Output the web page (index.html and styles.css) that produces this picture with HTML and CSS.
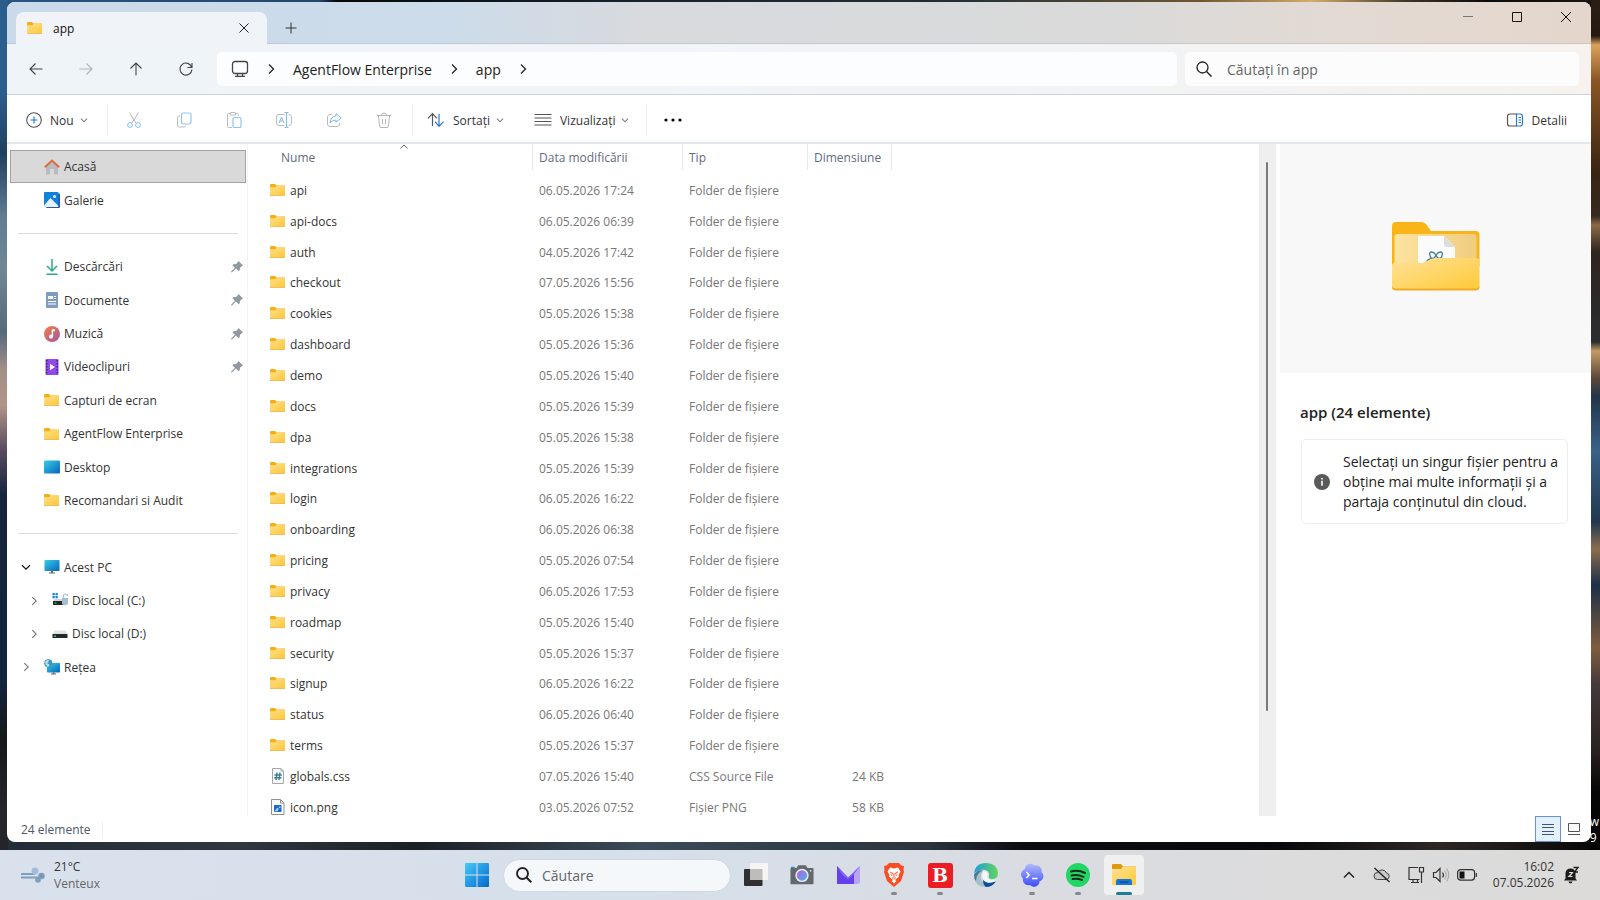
FILE: index.html
```html
<!DOCTYPE html>
<html lang="ro">
<head>
    <meta charset="UTF-8">
    <meta name="viewport" content="width=device-width, initial-scale=1.0">
    <title>app</title>
    <link rel="stylesheet" href="styles.css">
</head>
<body>
    <svg class="sprite" aria-hidden="true">
        <defs>
            <linearGradient id="gFolder" x1="0" y1="0" x2="1" y2="1">
                <stop offset="0" stop-color="#ffe08a"/><stop offset="1" stop-color="#fcc73a"/>
            </linearGradient>
            <linearGradient id="gScreen" x1="0" y1="0" x2="1" y2="1">
                <stop offset="0" stop-color="#35d0e8"/><stop offset="1" stop-color="#0a62b8"/>
            </linearGradient>
            <symbol id="folder" viewBox="0 0 16 16">
                <path d="M0 3.2Q0 2 1.2 2H5l1.6 1.5H15v3H0z" fill="#f5ae14"/>
                <path d="M0 5.2h5.4l1.2-1.4H15v9.4H0z" fill="url(#gFolder)"/>
                <path d="M0 13.2h15v.8H0z" fill="#eeb03a"/>
            </symbol>
            <symbol id="chev-right" viewBox="0 0 16 16">
                <path d="M6 3.5 10.5 8 6 12.5" fill="none" stroke="currentColor" stroke-width="1.3"/>
            </symbol>
            <symbol id="chev-down" viewBox="0 0 16 16">
                <path d="M4.5 6.5 8 10l3.500-3.500" fill="none" stroke="currentColor" stroke-width="1.2"/>
            </symbol>
            <symbol id="pin" viewBox="0 0 12 12">
                <path d="M7.600 0 12 4.400 11 5 9 6.800 8.700 9.300 7.600 10.200 4.900 7.600 1 11.500.2 11.200 0 10.800 3.900 6.800 1.400 4.200 2.400 3.200 5 3.100 7 1z" fill="#8f9aa0"/>
            </symbol>
            <symbol id="drive" viewBox="0 0 16 16">
                <path d="M2.500 4.500h11L15.500 8H.5z" fill="#dfe2e4"/>
                <path d="M.5 8h15v4h-15z" fill="#24282a"/>
                <path d="M2 9.500h2v1.200H2z" fill="#2fe06a"/>
            </symbol>
        </defs>
    </svg>

    <div class="desktop">
        <div class="desktop-label">w<br>9</div>

        <main class="window">
            <header class="titlebar">
                <div class="tab">
                    <svg class="icon"><use href="#folder"/></svg>
                    <span class="tab-name">app</span>
                    <button class="tab-close" aria-label="Închideți fila">
                        <svg viewBox="0 0 10 10" width="10" height="10"><path d="m.5.5 9 9m0-9-9 9" stroke="#222" fill="none"/></svg>
                    </button>
                </div>
                <button class="new-tab" aria-label="Filă nouă">
                    <svg viewBox="0 0 12 12" width="12" height="12"><path d="M6 .5v11M.5 6h11" stroke="#333" fill="none"/></svg>
                </button>
                <div class="window-controls">
                    <button aria-label="Minimizare"><svg viewBox="0 0 10 10" width="10" height="10"><path d="M0 4.500h10" stroke="#777"/></svg></button>
                    <button aria-label="Maximizare"><svg viewBox="0 0 10 10" width="10" height="10"><path d="M.5.5h9v9h-9z" stroke="#111" fill="none"/></svg></button>
                    <button aria-label="Închidere"><svg viewBox="0 0 10 10" width="10" height="10"><path d="m0 0 10 10M10 0 0 10" stroke="#111" fill="none"/></svg></button>
                </div>
            </header>

            <nav class="address-row">
                <div class="nav-buttons">
                    <button aria-label="Înapoi"><svg class="icon" viewBox="0 0 16 16"><path d="M14.500 8H2M7.500 2.500 2 8l5.500 5.500" fill="none" stroke="#444" stroke-width="1.100"/></svg></button>
                    <button aria-label="Înainte" disabled><svg class="icon" viewBox="0 0 16 16"><path d="M1.500 8H14M8.500 2.500 14 8l-5.500 5.500" fill="none" stroke="#b0b4b8" stroke-width="1.100"/></svg></button>
                    <button aria-label="Sus"><svg class="icon" viewBox="0 0 16 16"><path d="M8 14.500V2M2.500 7.500 8 2l5.500 5.500" fill="none" stroke="#444" stroke-width="1.100"/></svg></button>
                    <button aria-label="Reîmprospătare"><svg class="icon" viewBox="0 0 16 16"><path d="M13.800 6.500A6 6 0 1 0 14 8.500M14 2v4.500H9.500" fill="none" stroke="#444" stroke-width="1.100"/></svg></button>
                </div>
                <div class="breadcrumb">
                    <svg class="monitor" viewBox="0 0 18 18"><rect x="1.500" y="1.500" width="15" height="12" rx="2.500" fill="none" stroke="#444" stroke-width="1.300"/><path d="M6.500 13.500V16m5-2.500V16M4 16.300h10" stroke="#444" stroke-width="1.300"/></svg>
                    <svg class="icon crumb-sep"><use href="#chev-right"/></svg>
                    <a href="#">AgentFlow Enterprise</a>
                    <svg class="icon crumb-sep"><use href="#chev-right"/></svg>
                    <a href="#">app</a>
                    <svg class="icon crumb-sep"><use href="#chev-right"/></svg>
                </div>
                <label class="search-box">
                    <svg class="icon" viewBox="0 0 16 16"><circle cx="6.500" cy="6.500" r="5.500" fill="none" stroke="#222" stroke-width="1.300"/><path d="m10.500 10.500 5 5" stroke="#222" stroke-width="1.400"/></svg>
                    <input type="text" placeholder="Căutați în app" aria-label="Căutați în app">
                </label>
            </nav>

            <div class="toolbar">
                <button class="tool new-button">
                    <svg class="icon" viewBox="0 0 16 16"><circle cx="8" cy="8" r="7.300" fill="none" stroke="#555" stroke-width="1.100"/><path d="M8 4.500v7M4.500 8h7" stroke="#2b78d8" stroke-width="1.200"/></svg>
                    Nou
                    <svg class="chev"><use href="#chev-down"/></svg>
                </button>
                <div class="tool-icons">
                    <button aria-label="Decupați" disabled><svg class="icon" viewBox="0 0 16 16" fill="none"><path d="m3.500.5 6.700 10.800M12.500.5 5.800 11.300" stroke="#b4b8bc"/><circle cx="4" cy="13" r="2.400" stroke="#7fbcf2"/><circle cx="12" cy="13" r="2.400" stroke="#7fbcf2"/></svg></button>
                    <button aria-label="Copiați" disabled><svg class="icon" viewBox="0 0 16 16" fill="none"><path d="M4 4H3Q1.500 4 1.500 5.500v7.500Q1.500 15 3.500 15H8q1.500 0 1.500-1.500" stroke="#b9bdc0"/><rect x="5.500" y="1" width="9.500" height="11" rx="1.800" stroke="#8fc6f5" stroke-width="1.200"/></svg></button>
                    <button aria-label="Lipiți" disabled><svg class="icon" viewBox="0 0 16 16" fill="none"><path d="M6 15.500H2.500Q1.500 15.500 1.500 14.500v-12Q1.500 1.500 2.500 1.500H4m6 0h1.500q1 0 1 1V4M4.500.5h5V3h-5z" stroke="#b9bdc0"/><rect x="7" y="5.500" width="8" height="10" rx="1.200" stroke="#8fc6f5" stroke-width="1.200"/></svg></button>
                    <button aria-label="Redenumiți" disabled><svg class="wide" viewBox="0 0 18 16" fill="none"><path d="M9.500 2.500H4Q1.500 2.500 1.500 5v6q0 2.500 2.500 2.500h5.500m4-11Q16.500 2.500 16.500 5v6q0 2.500-3 2.500" stroke="#b9bdc0"/><path d="M4 11 6.500 5 9 11M5 9h3M9.500.5h4m-2 0v15m-2 0h4" stroke="#7fbcf2"/></svg></button>
                    <button aria-label="Partajați" disabled><svg class="icon" viewBox="0 0 16 16" fill="none"><path d="M6 2.500H4Q1.500 2.500 1.500 5v7q0 2.500 2.500 2.500h7q2.500 0 2.500-2.500v-1" stroke="#b9bdc0"/><path d="M10 1.500 15.200 6 10 10.300V8Q6 8 4 11 4.500 4.500 10 4z" stroke="#7fbcf2"/></svg></button>
                    <button aria-label="Ștergeți" disabled><svg class="icon" viewBox="0 0 16 16" fill="none"><path d="M1 3.500h14M5.500 3.500Q5.500 1 8 1t2.500 2.500M2.500 3.500l1 10.500q.2 1.500 1.500 1.500h6q1.300 0 1.500-1.500l1-10.500M6.500 7v5m3-5v5" stroke="#b4b7ba"/></svg></button>
                </div>
                <button class="tool sort-button">
                    <svg class="wide" viewBox="0 0 18 16" fill="none" stroke-width="1.200"><path d="M5.500 14V2M1 6.300 5.500 1.700 10 6.300" stroke="#555"/><path d="M12 2v12M8 9.700l4 4.600 4.500-4.600" stroke="#2b78d8"/></svg>
                    Sortați
                    <svg class="chev"><use href="#chev-down"/></svg>
                </button>
                <button class="tool view-button">
                    <svg class="wide" viewBox="0 0 18 16"><path d="M.5 2.500h17m-17 3.500h17m-17 3.500h17m-17 3.500h17" stroke="#555" stroke-width="1.100"/></svg>
                    Vizualizați
                    <svg class="chev"><use href="#chev-down"/></svg>
                </button>
                <button class="more-button" aria-label="Mai multe">
                    <svg viewBox="0 0 18 4" width="18" height="4"><circle cx="2" cy="2" r="1.600"/><circle cx="9" cy="2" r="1.600"/><circle cx="16" cy="2" r="1.600"/></svg>
                </button>
                <button class="tool details-button">
                    <svg class="wide" viewBox="0 0 18 16" fill="none"><path d="M10.500 2H4Q1.500 2 1.500 4.500v7Q1.500 14 4 14h6.500" stroke="#555" stroke-width="1.200"/><path d="M10.500 2H14q2.500 0 2.500 2.500v7Q16.500 14 14 14h-3.500zM12.500 5.500h2.500m-2.500 2.500h2.500m-2.500 2.500h2.500" stroke="#2b78d8" stroke-width="1.200"/></svg>
                    Detalii
                </button>
            </div>

            <div class="content">
                <nav class="sidebar">
                    <a href="#" class="place selected">
                        <svg class="icon" viewBox="0 0 16 16"><path d="M2 7 8 2l6 5v8.500h-4V10H6v5.500H2z" fill="#b9bcbf"/><path d="M.8 8.300 8 1.500l7.200 6.800" fill="none" stroke="#e0693a" stroke-width="1.900"/></svg>
                        <span>Acasă</span>
                    </a>
                    <a href="#" class="place">
                        <svg class="icon" viewBox="0 0 16 16"><path d="M14 1.500h1q1 0 1 1V15q0 1-1 1H3q-1 0-1-1h12z" fill="#2a55a5"/><rect width="14.500" height="15" rx="1" fill="#0f82dc"/><path d="m0 13.500 6.500-7.500 8 8q0 1-1 1H1q-1 0-1-1z" fill="#e6f3fd"/><circle cx="10.500" cy="4.500" r="1.500" fill="#e6f3fd"/></svg>
                        <span>Galerie</span>
                    </a>
                    <hr>
                    <a href="#" class="place">
                        <svg class="icon" viewBox="0 0 16 16"><path d="M8 0v11.500M3 7l5 5 5-5M2.500 15.200h11" fill="none" stroke="#2fa98c" stroke-width="1.500"/></svg>
                        <span>Descărcări</span>
                        <svg class="pin"><use href="#pin"/></svg>
                    </a>
                    <a href="#" class="place">
                        <svg class="icon" viewBox="0 0 16 16"><rect x="2" width="12" height="16" rx="1" fill="#7d9cc0"/><path d="M4 4h5v3H4zM4 9h8v1H4zm0 2.500h8v1H4zM10 4h2v1h-2zm0 2h2v1h-2z" fill="#fff"/></svg>
                        <span>Documente</span>
                        <svg class="pin"><use href="#pin"/></svg>
                    </a>
                    <a href="#" class="place">
                        <svg class="icon" viewBox="0 0 16 16"><defs><linearGradient id="gMusic" x1="0" y1="0" x2="1" y2="1"><stop offset="0" stop-color="#ee8246"/><stop offset="1" stop-color="#a753a0"/></linearGradient></defs><circle cx="8" cy="8" r="8" fill="url(#gMusic)"/><path d="M7.700 3.500 10.800 3v2.200l-1.700.4V10.500a2 2 0 1 1-1.400-1.800z" fill="#fff"/></svg>
                        <span>Muzică</span>
                        <svg class="pin"><use href="#pin"/></svg>
                    </a>
                    <a href="#" class="place">
                        <svg class="icon" viewBox="0 0 16 16"><rect x="1.500" width="13" height="16" rx="1" fill="#8f4be4"/><path d="M2.700 1v14.500M13.300 1v14.500" stroke="#401d78" stroke-width="1.400" stroke-dasharray="1.500 1.500"/><path d="m6 4.700 5 3.300-5 3.300z" fill="#fff"/></svg>
                        <span>Videoclipuri</span>
                        <svg class="pin"><use href="#pin"/></svg>
                    </a>
                    <a href="#" class="place"><svg class="icon"><use href="#folder"/></svg><span>Capturi de ecran</span></a>
                    <a href="#" class="place"><svg class="icon"><use href="#folder"/></svg><span>AgentFlow Enterprise</span></a>
                    <a href="#" class="place"><svg class="icon" viewBox="0 0 16 16"><rect y="1.500" width="16" height="13" rx="1" fill="url(#gScreen)"/></svg><span>Desktop</span></a>
                    <a href="#" class="place"><svg class="icon"><use href="#folder"/></svg><span>Recomandari si Audit</span></a>
                    <hr>
                    <a href="#" class="place tree open">
                        <svg class="expander"><use href="#chev-right"/></svg>
                        <svg class="icon" viewBox="0 0 16 16"><rect x=".5" y="1" width="15" height="11" rx=".8" fill="url(#gScreen)"/><path d="M7 12h2v1.500h2v1H5v-1h2z" fill="#667"/></svg>
                        <span>Acest PC</span>
                    </a>
                    <a href="#" class="place tree nested">
                        <svg class="expander"><use href="#chev-right"/></svg>
                        <svg class="icon" viewBox="0 0 16 16"><path d="M.5 0h2.300v2.300H.5zm3 0h2.300v2.300H3.500zm-3 3h2.300v2.300H.5zm3 0h2.300v2.300H3.500z" fill="#1d82dd"/><path d="M2.500 6h9l1 2.500H1z" fill="#d5d8da"/><path d="M1 8h11v4H1z" fill="#24282a"/><path d="M2.500 9.500h2v1h-2z" fill="#2fe06a"/><path d="M11.500 5V3q0-2 2-2t2 2" fill="none" stroke="#a9bbcc" stroke-width="1.100"/><path d="M10 5h6v6q-3 2.500-6 0z" fill="#a7bdd1"/></svg>
                        <span>Disc local (C:)</span>
                    </a>
                    <a href="#" class="place tree nested">
                        <svg class="expander"><use href="#chev-right"/></svg>
                        <svg class="icon"><use href="#drive"/></svg>
                        <span>Disc local (D:)</span>
                    </a>
                    <a href="#" class="place tree">
                        <svg class="expander"><use href="#chev-right"/></svg>
                        <svg class="icon" viewBox="0 0 16 16"><rect x="3" y="4" width="13" height="9.500" rx=".8" fill="url(#gScreen)"/><path d="M8.500 13.500h2v1h1.500v1H7v-1h1.500z" fill="#667"/><circle cx="4.300" cy="4.300" r="4.100" fill="#3f94bd"/><path d="M1 3q2-3 4-1.500-.2 2-2 3 2.500 0 2.500 2L4 8Q1 6 1 3z" fill="#b6dfe8"/></svg>
                        <span>Rețea</span>
                    </a>
                </nav>

                <section class="file-list">
                    <svg class="sort-mark" viewBox="0 0 8 5"><path d="M.5 4.500 4 1l3.500 3.500" fill="none" stroke="#666"/></svg>
                    <table>
                        <thead>
                            <tr><th class="name">Nume</th><th class="date">Data modificării</th><th class="type">Tip</th><th class="size">Dimensiune</th><th class="rest"></th></tr>
                        </thead>
                        <tbody>
                            <tr><td><svg class="icon"><use href="#folder"/></svg>api</td><td>06.05.2026 17:24</td><td>Folder de fișiere</td><td></td></tr>
                            <tr><td><svg class="icon"><use href="#folder"/></svg>api-docs</td><td>06.05.2026 06:39</td><td>Folder de fișiere</td><td></td></tr>
                            <tr><td><svg class="icon"><use href="#folder"/></svg>auth</td><td>04.05.2026 17:42</td><td>Folder de fișiere</td><td></td></tr>
                            <tr><td><svg class="icon"><use href="#folder"/></svg>checkout</td><td>07.05.2026 15:56</td><td>Folder de fișiere</td><td></td></tr>
                            <tr><td><svg class="icon"><use href="#folder"/></svg>cookies</td><td>05.05.2026 15:38</td><td>Folder de fișiere</td><td></td></tr>
                            <tr><td><svg class="icon"><use href="#folder"/></svg>dashboard</td><td>05.05.2026 15:36</td><td>Folder de fișiere</td><td></td></tr>
                            <tr><td><svg class="icon"><use href="#folder"/></svg>demo</td><td>05.05.2026 15:40</td><td>Folder de fișiere</td><td></td></tr>
                            <tr><td><svg class="icon"><use href="#folder"/></svg>docs</td><td>05.05.2026 15:39</td><td>Folder de fișiere</td><td></td></tr>
                            <tr><td><svg class="icon"><use href="#folder"/></svg>dpa</td><td>05.05.2026 15:38</td><td>Folder de fișiere</td><td></td></tr>
                            <tr><td><svg class="icon"><use href="#folder"/></svg>integrations</td><td>05.05.2026 15:39</td><td>Folder de fișiere</td><td></td></tr>
                            <tr><td><svg class="icon"><use href="#folder"/></svg>login</td><td>06.05.2026 16:22</td><td>Folder de fișiere</td><td></td></tr>
                            <tr><td><svg class="icon"><use href="#folder"/></svg>onboarding</td><td>06.05.2026 06:38</td><td>Folder de fișiere</td><td></td></tr>
                            <tr><td><svg class="icon"><use href="#folder"/></svg>pricing</td><td>05.05.2026 07:54</td><td>Folder de fișiere</td><td></td></tr>
                            <tr><td><svg class="icon"><use href="#folder"/></svg>privacy</td><td>06.05.2026 17:53</td><td>Folder de fișiere</td><td></td></tr>
                            <tr><td><svg class="icon"><use href="#folder"/></svg>roadmap</td><td>05.05.2026 15:40</td><td>Folder de fișiere</td><td></td></tr>
                            <tr><td><svg class="icon"><use href="#folder"/></svg>security</td><td>05.05.2026 15:37</td><td>Folder de fișiere</td><td></td></tr>
                            <tr><td><svg class="icon"><use href="#folder"/></svg>signup</td><td>06.05.2026 16:22</td><td>Folder de fișiere</td><td></td></tr>
                            <tr><td><svg class="icon"><use href="#folder"/></svg>status</td><td>06.05.2026 06:40</td><td>Folder de fișiere</td><td></td></tr>
                            <tr><td><svg class="icon"><use href="#folder"/></svg>terms</td><td>05.05.2026 15:37</td><td>Folder de fișiere</td><td></td></tr>
                            <tr><td><svg class="icon" viewBox="0 0 16 16"><path d="M2.500.5H11L13.500 3v12.500h-11z" fill="#fafafa" stroke="#a5a8aa"/><path d="M11 .5V3h2.500" fill="none" stroke="#a5a8aa"/><path d="M7 4.500 6 12m4-7.500L9 12M4.500 7h7.300M4.200 9.800h7.300" fill="none" stroke="#3d7c96" stroke-width="1.400"/></svg>globals.css</td><td>07.05.2026 15:40</td><td>CSS Source File</td><td>24 KB</td></tr>
                            <tr><td><svg class="icon" viewBox="0 0 16 16"><path d="M1.500.5h9L14 4v11.500H1.500z" fill="#fdfdfd" stroke="#8d9093"/><path d="M10.500.5V4H14" fill="none" stroke="#8d9093"/><rect x="4" y="6" width="7.500" height="7" rx=".8" fill="#1c67cc"/><path d="m4.500 12 3-3.500 1.500 1.500-2 2.500zM9 7.500h1.500V9H9z" fill="#a5d3f8"/></svg>icon.png</td><td>03.05.2026 07:52</td><td>Fișier PNG</td><td>58 KB</td></tr>
                        </tbody>
                    </table>
                </section>

                <div class="scrollbar"><div class="thumb"></div></div>

                <aside class="details">
                    <div class="preview">
                        <svg viewBox="0 0 88 70" width="88" height="70">
                            <defs>
                                <linearGradient id="gBack" x1="0" y1="0" x2="1" y2="0"><stop offset="0" stop-color="#fde3a0"/><stop offset="1" stop-color="#efcd7f"/></linearGradient>
                                <linearGradient id="gFront" x1="0" y1="0" x2="1" y2="1"><stop offset="0" stop-color="#ffe298"/><stop offset="1" stop-color="#ffc936"/></linearGradient>
                            </defs>
                            <path d="M0 5Q0 1 4 1h25q3 0 5 2l5 7h45q3.500 0 3.500 3.500V45H0z" fill="#f9b517"/>
                            <path d="M2.500 16q0-3 3-3h76q3 0 3 3v30h-82z" fill="url(#gBack)"/>
                            <path d="M26 15h26l11 11v22H26z" fill="#fbfbfc"/>
                            <path d="M52 15v8q0 3 3 3h8z" fill="#dcdde0"/>
                            <path d="M44 34q-2-3-4.500-3Q37 31 38 34.500q.5 3 3 3Q43 37 44 34q2-3 4.500-3 2.500 0 1.500 3.500-.5 3-3 3Q45 37 44 34M40 37.500q-5 0-7 7M48 37.500h3" fill="none" stroke="#477f9c" stroke-width="1.300"/>
                            <path d="M0 45q0-3 3-3h25q3 0 6-1.500l4-2Q40 37 44 37h40q3.500 0 3.500 3.500V65q0 4-4 4H4q-4 0-4-4z" fill="url(#gFront)"/>
                            <path d="M0 64.500q0 3 4 3h79.500q4 0 4-3V66q0 3.500-4 3.500H4Q0 69.500 0 66z" fill="#edac2a"/>
                        </svg>
                    </div>
                    <h2>app (24 elemente)</h2>
                    <div class="info-card">
                        <svg class="icon" viewBox="0 0 16 16"><circle cx="8" cy="8" r="8" fill="#5a5a5a"/><path d="M7.200 6.800h1.600v5H7.200zM7.200 4h1.600v1.600H7.200z" fill="#fff"/></svg>
                        <p>Selectați un singur fișier pentru a obține mai multe informații și a partaja conținutul din cloud.</p>
                    </div>
                </aside>
            </div>

            <footer class="statusbar">
                <span class="count">24 elemente</span>
                <div class="view-toggle">
                    <button class="active" aria-label="Detalii"><svg viewBox="0 0 12 12" width="12" height="12"><path d="M0 1.500h12M0 4.500h12M0 8.500h12M0 11.500h12" stroke="#456"/></svg></button>
                    <button aria-label="Pictograme mari"><svg viewBox="0 0 12 12" width="12" height="12"><path d="M.5.5h11v8H.5zM0 11.500h12" fill="none" stroke="#555"/></svg></button>
                </div>
            </footer>
        </main>

        <footer class="taskbar">
            <button class="weather">
                <svg viewBox="0 0 24 16" width="24" height="16" fill="none" stroke="#7f9dbd" stroke-width="2"><path d="M0 7h14"/><path d="M0 10.500h18"/><circle cx="14" cy="4" r="2.400" fill="#a5bcd6" stroke="#a5bcd6"/><circle cx="20.500" cy="9" r="2.300" fill="#6e8db0"/><circle cx="17" cy="13" r="1.800" fill="#7f9dbd"/></svg>
                <span class="weather-text"><span>21°C</span><span class="weather-desc">Venteux</span></span>
            </button>

            <div class="task-center">
                <button class="start" aria-label="Start">
                    <svg viewBox="0 0 24 24" width="24" height="24"><defs><linearGradient id="gWin" x1="0" y1="0" x2="1" y2="1"><stop offset="0" stop-color="#45c9fb"/><stop offset="1" stop-color="#0468cc"/></linearGradient></defs><path d="M0 1q0-1 1-1h10.500v11.500H0zM12.500 0H23q1 0 1 1v10.500H12.500zM0 12.500h11.500V24H1q-1 0-1-1zM12.500 12.500H24V23q0 1-1 1H12.500z" fill="url(#gWin)"/></svg>
                </button>
                <label class="task-search">
                    <svg class="icon" viewBox="0 0 16 16"><circle cx="6.500" cy="6.500" r="5.500" fill="none" stroke="#222" stroke-width="1.900"/><path d="m10.500 10.500 4.800 4.800" stroke="#222" stroke-width="2"/></svg>
                    <input type="text" placeholder="Căutare" aria-label="Căutare">
                </label>
                <div class="apps">
                    <button aria-label="Vizualizare activități">
                        <svg viewBox="0 0 24 24"><rect y="6" width="18.500" height="17" rx="1" fill="#303030"/><rect x="6" width="18.500" height="17" rx="1" fill="#f7f5f3"/><path d="M6 6h12.500v11H6z" fill="#bdbdbd"/></svg>
                    </button>
                    <button aria-label="Cameră">
                        <svg viewBox="0 0 26 24"><defs><linearGradient id="gLens" x1="0" y1="0" x2="1" y2="1"><stop offset="0" stop-color="#c05ad8"/><stop offset="1" stop-color="#45b4f4"/></linearGradient></defs><path d="M1 3h4v3H1z" fill="#2892dd"/><path d="M1.500 4.500H7l2-3h8l2 3h5.500q1 0 1 1V21q0 1-1 1h-23q-1 0-1-1V5.500q0-1 1-1z" fill="#62686c"/><circle cx="13" cy="12.500" r="7.200" fill="#e7edf4"/><circle cx="13" cy="12.500" r="5.600" fill="url(#gLens)"/><circle cx="22.300" cy="7.500" r="1" fill="#dde"/></svg>
                    </button>
                    <button aria-label="Mail">
                        <svg viewBox="0 0 24 24"><path d="M1 3v18h17V10l-6 4.500z" fill="#6440ec"/><path d="m24 3-6 5v13h4q2 0 2-2z" fill="#b9a3f5"/><path d="M1 3 12 14.500 24 3l-6 8-6 5.500-6-5z" fill="#8465f5"/></svg>
                    </button>
                    <button class="running" aria-label="Brave">
                        <svg viewBox="0 0 24 24"><path d="M7 0h10l2.500 2.500L22 3l-.5 4 .5 2-3 9-7 6-7-6-3-9 .5-2L2 3l2.500-.5z" fill="#fb4d22"/><path d="M8 4.500 12 5.500l4-1 2.500 4-2 3.500.5 1.500-5 4.500-5-4.500.5-1.500-2-3.500z" fill="#fff"/><path d="m8 9 2.500 1-1 3M16 9l-2.500 1 1 3M12 10v3.500l-1.500 1.500L12 16.500l1.500-1.500-1.500-1.500" fill="none" stroke="#fb4d22" stroke-width=".9"/><path d="m9.500 18 2.500-1.500 2.500 1.500-2.500 2.500z" fill="#fff"/></svg>
                    </button>
                    <button class="running" aria-label="Bitdefender">
                        <span class="bitdefender">B</span>
                    </button>
                    <button aria-label="Edge">
                        <svg viewBox="0 0 24 24"><defs><linearGradient id="gEdge" x1="0" y1="0" x2="1" y2="0"><stop offset="0" stop-color="#1b9de0"/><stop offset="1" stop-color="#62d657"/></linearGradient></defs><path d="M0 11Q1 0 12 0q11 0 12 10 0 6-6 6-4 0-3-3 1-5-4-6Q4 6 0 11z" fill="url(#gEdge)"/><path d="M0 12Q3 6 9 8q-4 5-1 10 4 5 12 2-3 4-8 4Q0 24 0 12z" fill="#a9c0ca"/><path d="M9 17q5 4 13 1.500Q18 24 12 24q-3-2-3-7z" fill="#0d4f9c"/><path d="M9 8q4 0 5 3-2 4 1.500 5.500Q19 18 22.500 16q-4 4.500-9.500 3.500Q6 17 9 8z" fill="#f4f7f9"/><path d="M0 12Q3 6 9 7.500 2 10 2 18 0 16 0 12z" fill="#477b91"/></svg>
                    </button>
                    <button class="running" aria-label="Terminal">
                        <svg viewBox="0 0 24 24"><defs><linearGradient id="gCloud" x1="0" y1="0" x2="0" y2="1"><stop offset="0" stop-color="#b2b8fc"/><stop offset="1" stop-color="#3c4ef4"/></linearGradient></defs><path d="M5 6a5.500 5.500 0 0 1 9.500-3.500A5.500 5.500 0 0 1 21.500 9a5.500 5.500 0 0 1-2 9.500A5.500 5.500 0 0 1 10 22a5.500 5.500 0 0 1-7-6.500A5.500 5.500 0 0 1 5 6z" fill="url(#gCloud)"/><path d="m6.500 9 2.500 3-2.500 3M12 15.500h5.500" fill="none" stroke="#fff" stroke-width="1.600"/></svg>
                    </button>
                    <button class="running" aria-label="Spotify">
                        <svg viewBox="0 0 24 24"><circle cx="12" cy="12" r="12" fill="#20d765"/><path d="M5 8.500q7-2 14 1.500M5.500 12.500q6-1.500 12 1.300M6.500 16q5-1 9.500 1" fill="none" stroke="#132b1b" stroke-width="2" stroke-linecap="round"/></svg>
                    </button>
                    <button class="running current" aria-label="Explorer">
                        <svg viewBox="0 0 24 24"><path d="M0 2q0-1 1-1h8l2 2.500h13V12H0z" fill="#dd9a0e"/><path d="M0 6h9l2-2.500h13V22H0z" fill="url(#gFront)"/><path d="M4 22v-4q0-2 2-2h12q2 0 2 2v4z" fill="#1877d2"/><path d="M7.500 18.500h9v1.300h-9z" fill="#0b4c94"/></svg>
                    </button>
                </div>
            </div>

            <div class="tray">
                <button aria-label="Pictograme ascunse"><svg class="icon" viewBox="0 0 16 16"><path d="M3 10.500 8 5.500l5 5" fill="none" stroke="#222" stroke-width="1.500"/></svg></button>
                <button aria-label="OneDrive"><svg viewBox="0 0 18 16" width="18" height="16"><path d="M4.500 12.500a3.500 3.500 0 0 1 0-7 5 5 0 0 1 9 .5 3.300 3.300 0 0 1 0 6.500z" fill="#c8c8c8" stroke="#444"/><path d="m1.500 1 15 14" stroke="#222" stroke-width="1.400"/></svg></button>
                <button class="system" aria-label="Rețea, volum, baterie">
                    <svg viewBox="0 0 18 18" width="18" height="18" fill="none" stroke="#333" stroke-width="1.200"><path d="M11 1.500H2v12h10.500M4 16.500h8M6 13.500v3m4.500-3v3M12.500 1.500h4v4.500h-4zM14.500 6v11"/></svg>
                    <svg viewBox="0 0 18 16" width="18" height="16" fill="none" stroke="#333" stroke-width="1.200"><path d="M1.500 5.500H4l4-4v13l-4-4H1.500zM10.500 5.500q2 2.500 0 5"/><path d="M12.500 3.500q3.500 4.500 0 9M14.700 1.500q4 6.500 0 13" stroke="#aaa"/></svg>
                    <svg viewBox="0 0 20 12" width="20" height="12"><rect x=".6" y=".6" width="17" height="10.500" rx="3" fill="none" stroke="#333" stroke-width="1.200"/><path d="M2.500 2.500h5v7h-5z" fill="#111"/><path d="M19.300 4v4" stroke="#333" stroke-width="1.200"/></svg>
                </button>
                <button class="clock"><span>16:02</span><span>07.05.2026</span></button>
                <button aria-label="Notificări"><svg viewBox="0 0 16 18" width="16" height="18"><path d="M2.500 12.500V7Q3 2.500 7.500 2.500q4.500 0 5 4.500v5.500l1.500 2H1z" fill="#1c1c1c"/><path d="M5.500 15.500h4q-.5 2-2 2t-2-2z" fill="#1c1c1c"/><path d="M6 6.500h3.500L6 10.500h3.500" fill="none" stroke="#ddd" stroke-width="1.200"/><path d="M10.500 1.500H15L11.500 6H15" fill="none" stroke="#1c1c1c" stroke-width="1.300"/></svg></button>
            </div>
        </footer>
    </div>
</body>
</html>
```
FILE: styles.css
```css
* {
    box-sizing: border-box;
}
body {
    margin: 0;
    font-family: "Open Sans", "Noto Sans", sans-serif;
    font-size: 12px;
    color: #333;
}
button {
    display: flex;
    align-items: center;
    justify-content: center;
    padding: 0;
    border: none;
    background: none;
    font: inherit;
    color: inherit;
}
input {
    flex: 1;
    min-width: 0;
    padding: 0;
    border: none;
    outline: none;
    background: none;
    font: inherit;
    color: inherit;
}
input::placeholder {
    color: #666;
    opacity: 1;
}
a {
    color: inherit;
    text-decoration: none;
}
svg {
    flex: none;
}
.sprite {
    position: absolute;
    width: 0;
    height: 0;
}
.icon {
    width: 16px;
    height: 16px;
}

/* desktop wallpaper, seen only round the window */
.desktop {
    position: relative;
    display: flex;
    flex-direction: column;
    height: 100vh;
    padding-top: 2px;
    overflow: hidden;
    background:
        linear-gradient(#2a5c8c 0, #2d5f8e 10%, #20405f 17%, #5f7c92 24%, #6d8797 30%, #59697c 37%, #a08f87 41%, #b29488 45%, #584c5e 50%, #16253c 55%, #14243b 76%, #15191a 82%, #26262a 90%, #20252b 100%) left / 8px 100% no-repeat,
        linear-gradient(#2b1e15 0, #241a12 4%, #d9a25e 5%, #8a5526 9%, #3a2412 19%, #35291f 24%, #8b6a46 25%, #2f241f 28%, #2a2d31 38%, #c49a66 39%, #5e4839 42%, #23344a 44%, #3a6187 50%, #22384f 58%, #8b6d4f 61%, #1d2f47 65%, #7f5d3f 72%, #45393a 76%, #2b2422 83%, #060606 88%, #000 100%) right / 9px 100% no-repeat,
        linear-gradient(90deg, #275582 0, #24466a 20%, #05080c 21%, #16222c 40%, #233038 60%, #6e5631 75%, #d3ad6b 82%, #3d3325 88%, #0b0b0b 93%, #1a1613 100%) top / 100% 4px no-repeat,
        linear-gradient(90deg, #222e38 0, #30373d 15%, #1b2024 26%, #3b4b59 40%, #2a343c 58%, #0b0c10 64%, #08090b 80%, #2d2824 90%, #060606 100%);
}
.desktop-label {
    position: absolute;
    right: 1px;
    bottom: 54px;
    font-size: 12px;
    line-height: 16px;
    color: #fff;
}

/* explorer window */
.window {
    position: relative;
    flex: 1;
    min-height: 0;
    display: flex;
    flex-direction: column;
    margin: 0 9px 8px 7px;
    border-radius: 8px;
    overflow: hidden;
    background: #fff;
}
.titlebar {
    display: flex;
    height: 42px;
    padding-left: 9px;
    background: linear-gradient(90deg, #cbdaea 0, #cddcea 28%, #d8dade 40%, #dadada 70%, #e3dad3 85%, #e4d6cc 100%);
    border-bottom: 1px solid rgba(120, 130, 150, 0.2);
}
.tab {
    display: flex;
    align-items: center;
    width: 251px;
    height: 32px;
    margin-top: 10px;
    padding: 0 13px 0 11px;
    border-radius: 8px 8px 0 0;
    background: #f0f4f9;
}
.tab-name {
    margin-left: 10px;
    font-weight: 500;
    color: #111;
}
.tab-close {
    width: 20px;
    height: 20px;
    margin-left: auto;
}
.new-tab {
    width: 48px;
    height: 52px;
}
.window-controls {
    display: flex;
    margin-left: auto;
    padding-right: 1px;
}
.window-controls button {
    width: 49px;
    height: 30px;
}

.address-row {
    display: flex;
    align-items: center;
    height: 51px;
    padding-right: 12px;
    background: linear-gradient(90deg, #eff4f9 0, #f0f4f9 35%, #f3f3f4 75%, #f7f2ee 100%);
    border-bottom: 1px solid #ccd3dc;
    font-size: 14px;
}
.nav-buttons {
    display: flex;
    width: 210px;
    padding-left: 4px;
}
.nav-buttons button {
    width: 50px;
    height: 34px;
}
.breadcrumb {
    display: flex;
    align-items: center;
    gap: 14px;
    flex: 1;
    height: 34px;
    padding-left: 14px;
    border-radius: 5px;
    background: #fcfdfe;
    color: #222;
}
.monitor {
    width: 18px;
    height: 18px;
}
.search-box {
    display: flex;
    align-items: center;
    gap: 15px;
    width: 394px;
    height: 34px;
    margin-left: 8px;
    padding: 0 11px;
    border-radius: 5px;
    background: #fcfcfc;
}

.toolbar {
    display: flex;
    align-items: center;
    height: 49px;
    padding: 3px 24px 0 0;
    border-bottom: 2px solid #e2e7eb;
}
.tool {
    height: 32px;
    gap: 8px;
}
.chev {
    width: 14px;
    height: 14px;
    margin-left: -5px;
    color: #777;
}
.wide {
    width: 18px;
    height: 16px;
}
.new-button {
    justify-content: flex-start;
    width: 101px;
    padding-left: 19px;
    border-right: 1px solid #eee;
}
.tool-icons {
    display: flex;
    padding: 0 3px 0 1px;
    border-right: 1px solid #eee;
}
.tool-icons button {
    width: 50px;
    height: 32px;
}
.sort-button {
    margin-left: 14px;
}
.view-button {
    margin-left: 27px;
    padding-right: 14px;
    border-right: 1px solid #eee;
}
.more-button {
    margin-left: 17px;
}
.details-button {
    margin-left: auto;
}

.content {
    flex: 1;
    min-height: 0;
    display: flex;
    overflow: hidden;
}
.sidebar {
    display: grid;
    grid-template-rows: repeat(16, 1fr);
    align-self: flex-start;
    width: 240px;
    height: 542px;
    padding: 6px 1px 2px 3px;
}
.place {
    display: flex;
    align-items: center;
    gap: 4px;
    padding: 0 2px 0 33px;
    border: 1px solid transparent;
}
.place.selected {
    border-color: #a3a3a3;
    background: #d9d9d9;
}
.sidebar hr {
    align-self: center;
    width: 220px;
    margin: 0 0 0 8px;
    border: none;
    border-top: 1px solid #dadada;
}
.pin {
    width: 12px;
    height: 12px;
    margin-left: auto;
}
.tree {
    padding-left: 8px;
}
.nested {
    padding-left: 16px;
}
.expander {
    width: 14px;
    height: 14px;
    margin-right: 7px;
    color: #777;
}
.open .expander {
    transform: rotate(90deg);
    color: #111;
}

.file-list {
    position: relative;
    flex: 1;
    min-width: 0;
    overflow: hidden;
    border-left: 1px solid #f4f4f4;
}
.sort-mark {
    position: absolute;
    top: 0;
    left: 152px;
    width: 8px;
    height: 5px;
}
table {
    width: 100%;
    height: 679px;
    table-layout: fixed;
    border-collapse: collapse;
}
th {
    height: 31px;
    padding: 0 6px 5px;
    text-align: left;
    font-weight: 400;
    color: #5f6b80;
    background: linear-gradient(#e8e8e8, #e8e8e8) right top / 1px 26px no-repeat;
}
th.name {
    width: 285px;
    padding-left: 33px;
}
th.date {
    width: 150px;
}
th.type {
    width: 125px;
}
th.size {
    width: 84px;
}
th.rest {
    background: none;
}
td {
    padding: 0 6px;
    color: #777;
}
td:first-child {
    padding-left: 22px;
    color: #333;
}
td:nth-child(4) {
    padding-right: 8px;
    text-align: right;
}
td .icon {
    margin-right: 4px;
    vertical-align: -3px;
}

.scrollbar {
    width: 17px;
    padding: 18px 8px 0 7px;
    background: #efefef;
}
.thumb {
    height: 84%;
    border-radius: 1px;
    background: #7a7a7a;
}
.details {
    width: 311px;
    margin-left: 4px;
    color: #222;
}
.preview {
    display: flex;
    align-items: center;
    justify-content: center;
    height: 229px;
    padding: 0 0 6px 0;
    background: #f8f8f8;
}
.details h2 {
    margin: 29px 20px 17px;
    font-size: 15px;
    line-height: 20px;
    font-weight: 600;
    color: #222;
}
.info-card {
    display: flex;
    align-items: center;
    gap: 13px;
    margin: 0 23px 0 21px;
    padding: 12px 8px 11px 12px;
    border: 1px solid #eee;
    border-radius: 5px;
    font-size: 14px;
    line-height: 20px;
}
.info-card p {
    margin: 0;
}

.statusbar {
    display: flex;
    align-items: center;
    height: 26px;
    padding-left: 14px;
    color: #4c5866;
}
.count {
    padding-right: 11px;
    border-right: 1px solid #eee;
}
.view-toggle {
    display: flex;
    margin-left: auto;
    padding-right: 5px;
}
.view-toggle button {
    width: 25px;
    height: 26px;
}
.view-toggle .active {
    width: 26px;
    border: 1px solid #6b8fd6;
    background: #e3f1fc;
}

/* taskbar */
.taskbar {
    display: grid;
    grid-template-columns: 465px 1fr auto;
    align-items: center;
    height: 50px;
    background: linear-gradient(90deg, #d9e1ec 0, #d6e0ea 40%, #d9dce3 60%, #dcdcdd 80%, #dcdbda 100%);
}
.weather {
    justify-content: flex-start;
    gap: 9px;
    padding-left: 21px;
}
.weather-text {
    display: flex;
    flex-direction: column;
    text-align: left;
    line-height: 17px;
}
.weather-desc {
    color: #666;
}
.task-center {
    display: flex;
    align-items: center;
}
.task-search {
    display: flex;
    align-items: center;
    gap: 10px;
    width: 228px;
    height: 33px;
    margin: 0 5px 0 14px;
    padding: 0 12px;
    border: 1px solid #cfd8e2;
    border-radius: 17px;
    background: #f5f8fb;
    font-size: 14px;
}
.apps {
    display: flex;
    gap: 6px;
}
.apps button {
    position: relative;
    width: 40px;
    height: 40px;
    border-radius: 4px;
}
.apps svg {
    width: 24px;
    height: 24px;
}
.apps .current {
    background: #f0f0f1;
}
.running::after {
    content: "";
    position: absolute;
    left: 17px;
    bottom: 0;
    width: 6px;
    height: 3px;
    border-radius: 2px;
    background: #85888c;
}
.running.current::after {
    left: 12px;
    width: 16px;
    background: #1c7f8e;
}
.bitdefender {
    width: 25px;
    height: 25px;
    border-radius: 3px;
    background: #ed1c24;
    color: #fff;
    font: bold 19px/25px "DejaVu Serif", serif;
}
.tray {
    display: flex;
    align-items: center;
    padding-right: 21px;
}
.tray button {
    margin-left: 16px;
}
.tray .system {
    gap: 7px;
}
.tray .clock {
    flex-direction: column;
    align-items: flex-end;
    line-height: 16px;
}
.tray .clock + button {
    margin-left: 9px;
}
```
